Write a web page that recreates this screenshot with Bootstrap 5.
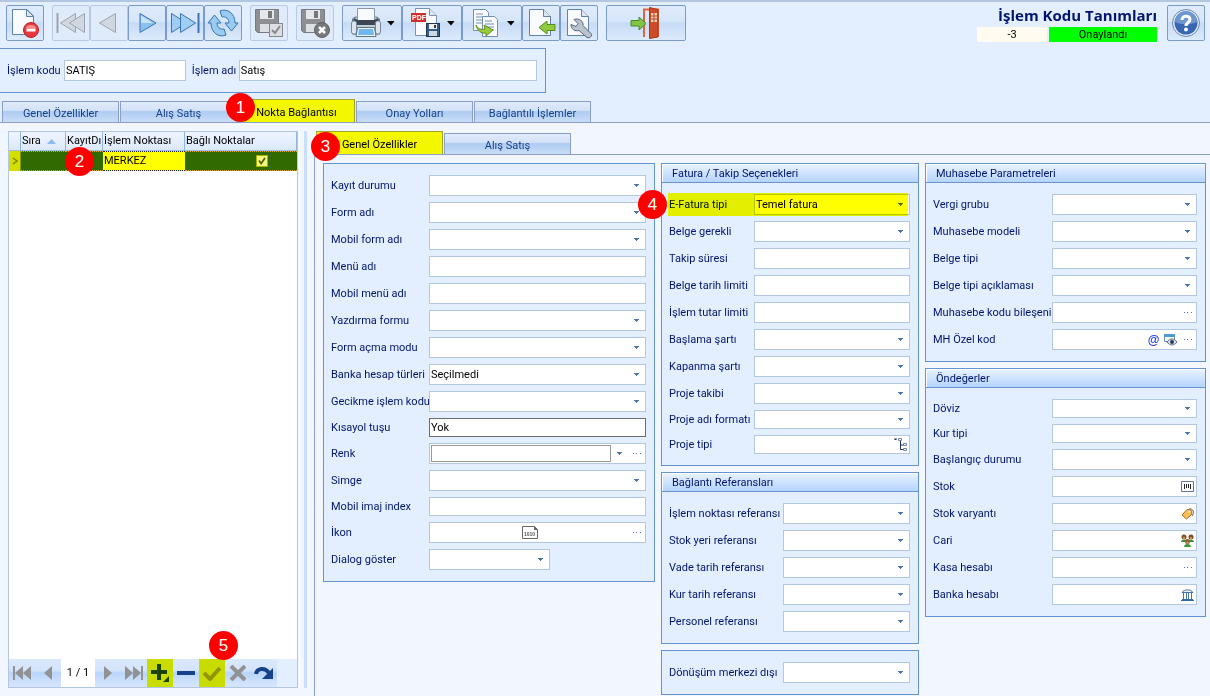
<!DOCTYPE html>
<html lang="tr">
<head>
<meta charset="utf-8">
<meta name="viewport" content="width=device-width, initial-scale=1">
<title>İşlem Kodu Tanımları</title>
<link href="https://cdn.jsdelivr.net/npm/bootstrap@5.3.0/dist/css/bootstrap.min.css" rel="stylesheet">
<style>
body{font-family:Roboto,"Noto Sans",sans-serif;font-size:11px;line-height:14px;color:#00156e;background:#e3efff}
button,input,select{font:inherit}
.toolbar{border-top:2px solid #b4c7e0;padding:3px 5px 0 6px;gap:8px}
.tb{height:36px;width:38px;padding:0;border:1px solid #7b9bcb;border-radius:2px;background:linear-gradient(#dfebfa,#d6e6fa 45%,#c6dbf5 50%,#dcebfd);display:flex;align-items:center;justify-content:center}
.tb:disabled{border-color:#b9cbe4;background:#dfeafa;opacity:1}
.tb-drop{width:60px;gap:5px}
.tb-exit{width:80px}
.tb svg{width:32px;height:32px;flex:none}
.tb .caret{width:8px;height:5px}
.formtitle{font:bold 15px/20px "Open Sans","Noto Sans",sans-serif;margin:0;text-align:right}
.pill{height:15px;line-height:15px;text-align:center;color:#000}
.idbox{background:#fffbf0;width:70px}
.okbox{background:#0f0;width:108px}
.keybox{border:1px solid #6595d1;border-left:0;max-width:546px;height:45px;margin-top:6px;padding:0 8px 0 7px}
.ctl{border:1px solid #b4c7e0;background:#fff;border-radius:0;height:21px;padding:0 1px;color:#000;min-width:0;display:block;flex:1 1 0}
.low{height:19px}
select.ctl{appearance:none;background:#fff url("data:image/svg+xml,%3Csvg xmlns='http://www.w3.org/2000/svg' width='5' height='3'%3E%3Cpath d='M0 0h5v1H4v1H3v1H2V2H1V1H0z' fill='%234a77b4'/%3E%3C/svg%3E") no-repeat right 6px center}
.combo{display:flex;align-items:center;padding-right:0}
.combo input{border:0;background:none;flex:1 1 0;min-width:0;padding:0;height:17px}
.combo button{border:0;background:none;padding:0;width:17px;height:17px;display:flex;align-items:center;justify-content:center}
.combo svg{display:block}
.tabs{border-bottom:1px solid #8ba0c8;align-items:flex-end}
.tabs button{width:117px;height:21px;margin-right:1px;border:1px solid #8ba0c8;border-bottom:0;border-radius:1px 1px 0 0;color:#15428b;padding:3px 0 0;background:linear-gradient(#e0ebfa,#d3e2f8 42%,#aecbf1 48%,#c9ddf8)}
.tabs button.active{height:23px;background:#f3f800;color:#000;border-color:#a0a32c}
.tabs .wide{width:127px}
.work{background:#f2f6ff}
.listpane{width:299px;padding:8px 1px 8px 8px}
.listbox{border:1px solid #b4c7e0;background:#fff}
.gridt{table-layout:fixed;width:100%;color:#000;border-collapse:separate;border-spacing:0}
.gridt th{height:19px;font-weight:normal;padding:0 1px;overflow:hidden;white-space:nowrap;color:#000;background:linear-gradient(#eef5ff,#dce9fb);border-right:1px solid #8fb3e3;border-bottom:1px solid #9ebbe5}
.gridt td{height:20px;padding:0 1px;background:#316a00;border:dotted #e0b000;border-width:1px 0}
.gridt td.ind{background:#d4df00;border:0;border-right:1px solid #8d9a00;text-align:center;padding:0}
.gridt td.hit{background:#ff0;border-color:#222}
.gridt input{appearance:none;display:block;width:12px;height:12px;margin:0 0 0 70px;border:1px solid #a8b000;background:#f4f780 url("data:image/svg+xml,%3Csvg xmlns='http://www.w3.org/2000/svg' width='10' height='10'%3E%3Cpath d='M2 4.500l2.200 3L8 2' fill='none' stroke='%23566500' stroke-width='1.800'/%3E%3C/svg%3E") center no-repeat}
.navi{height:28px;background:#e3efff}
.navi button{width:26px;height:28px;border:0;padding:0;background:linear-gradient(#dce9fc,#d3e4fc 40%,#b9d5fc 50%,#d3e4fc 90%);display:flex;align-items:center;justify-content:center}
.navi span.pos{width:34px;height:28px;line-height:28px;background:#fff;color:#000;text-align:center}
.navi button.hit{background:#c8dc00}
.split{width:8px;margin:8px 0;border-left:1px solid #fff}
.split i{display:block;width:3px;height:100%;margin-left:4px;background:#c9defa}
.detail{padding-top:8px;margin-left:7px;min-width:0}
.detail .tabs{padding-left:2px}
.sheet{border-left:1px solid #8ba0c8;padding:8px 4px 1px 8px;gap:6px}
.colA{flex:332 1 0;min-width:0}.colB{flex:258 1 0;min-width:0}.colC{flex:281 1 0;min-width:0}
.stack{display:flex;flex-direction:column;gap:6px}
.panelx{border:1px solid #6595d1;background:#e3efff;margin:0}
.panelx h2{font:inherit;margin:0;height:19px;line-height:19px;padding-left:10px;border-bottom:1px solid #6595d1;background:linear-gradient(#e9f3ff,#b5d4ff);box-shadow:inset 1px 1px #fff}
.rows{display:flex;flex-direction:column;gap:6px;padding:11px 8px 11px 7px}
.rows>div{display:flex;align-items:center;position:relative}
.rows label{width:98px;flex:none;white-space:nowrap}
.w85 label{width:85px}.w114 label{width:114px}.w119 label{width:119px}
.glow{position:absolute;inset:-1px 2px -1px -1px;background:#ff0;mix-blend-mode:multiply;pointer-events:none}
.step{position:absolute;width:29px;height:29px;border-radius:50%;background:#f00;color:#fff;font:17px/29px "Liberation Sans",Arial,sans-serif;text-align:center;z-index:5}
.s1{left:-13px;top:-7px}.s2{left:-1px;top:-5px}.s3{left:-6px;top:0}.s4{left:-31px;top:-4px}.s5{left:10px;top:-28px}
</style>
</head>
<body>
<div class="min-vh-100 d-flex flex-column">
<header class="toolbar d-flex align-items-start">
<button class="tb" aria-label="Sil"><svg viewBox="0 0 32 32"><path d="M3.500 2.500h14.500l6.500 6.500v18.500h-21z" fill="#f9fbfe" stroke="#5f84a8"/><path d="M17.500 2.500v7h7z" fill="#dce6f1" stroke="#5f84a8"/><circle cx="22" cy="23" r="7.500" fill="#e83a3e" stroke="#b92226"/><path d="M16.500 21a6 5 0 0 1 11 0z" fill="#f58e8e"/><rect x="17.500" y="21.500" width="9" height="3" fill="#fff"/></svg></button>
<div class="d-flex">
<button class="tb" disabled aria-label="İlk"><svg viewBox="0 0 32 32" fill="#d0d7e0" stroke="#9ba5b2"><path d="M2.500 6v20" stroke-width="2"/><path d="M20.500 6.500v19L5.500 16z"/><path d="M29.500 6.500v19L14.500 16z"/></svg></button>
<button class="tb" disabled aria-label="Önceki"><svg viewBox="0 0 32 32"><path d="M22.500 6.500v19L6.500 16z" fill="#d0d7e0" stroke="#9ba5b2"/></svg></button>
<button class="tb" aria-label="Sonraki"><svg viewBox="0 0 32 32"><path d="M9 6.500v19l16-9.500z" fill="#8cc0ee" stroke="#3c75b4"/><path d="M10 8.500V16h12z" fill="#c9e4fa"/></svg></button>
<button class="tb" aria-label="Son"><svg viewBox="0 0 32 32" fill="#9fcdf3" stroke="#3c75b4"><path d="M2.500 6.500v19l15-9.500z"/><path d="M11.500 6.500v19l15-9.500z"/><path d="M29.500 6v20" stroke-width="2"/></svg></button>
<button class="tb" aria-label="Yenile"><svg viewBox="0 0 32 32" fill="#9acbf0" stroke="#3873ae"><path d="M13 4C20 1 28 6 28 16h3l-6.500 8-6.500-8h4c0-4-3-7-7-6z"/><path d="M19 28C12 31 4 26 4 16H1l6.500-8L14 16h-4c0 4 3 7 7 6z"/></svg></button>
</div>
<button class="tb" disabled aria-label="Kaydet"><svg viewBox="0 0 32 32"><path d="M2.500 2.500h23v23h-21l-2-2z" fill="#8c8f94" stroke="#777a80"/><rect x="7" y="3" width="14" height="9" fill="#e5e7ea"/><rect x="15" y="4" width="4" height="7" fill="#777"/><rect x="7" y="17" width="15" height="8" fill="#dcdfe3"/><rect x="16.500" y="16.500" width="13" height="13" fill="#dcdee1" stroke="#85888c"/><path d="M19 23l3 3 5-7" fill="none" stroke="#858789" stroke-width="2"/></svg></button>
<button class="tb" disabled aria-label="İptal"><svg viewBox="0 0 32 32"><path d="M2.500 2.500h23v23h-21l-2-2z" fill="#8c8f94" stroke="#777a80"/><rect x="7" y="3" width="14" height="9" fill="#e5e7ea"/><rect x="15" y="4" width="4" height="7" fill="#777"/><rect x="7" y="17" width="15" height="8" fill="#dcdfe3"/><circle cx="23" cy="23" r="7.500" fill="#77797c" stroke="#5f6163"/><path d="M20 20l6 6m0-6l-6 6" stroke="#fff" stroke-width="2.500"/></svg></button>
<div class="d-flex">
<button class="tb tb-drop" aria-label="Yazdır"><svg viewBox="0 0 32 32"><path d="M2.500 13c0-2 2-3 4-3h19c2 0 4 1 4 3v14h-27z" fill="#c3cfdc" stroke="#63758a"/><path d="M7.500 1.500h17v12h-17z" fill="#f7faff" stroke="#8998ab"/><path d="M4 11l4 2h16l4-2c2 3 0 7-4 7H8c-4 0-6-4-4-7z" fill="#3c4654"/><rect x="1.500" y="14" width="5" height="13" rx="2" fill="#dde5ed" stroke="#74879c"/><rect x="25.500" y="14" width="5" height="13" rx="2" fill="#dde5ed" stroke="#74879c"/><path d="M7.500 20.500h17l1.500 9H6z" fill="#eff5fb" stroke="#5f7389"/><path d="M9 22h14l1 6H8z" fill="#6fb7ee"/></svg><svg class="caret" viewBox="0 0 8 5"><path d="M0 0h7.500L4 4.500z"/></svg></button>
<button class="tb tb-drop" aria-label="PDF kaydet"><svg viewBox="0 0 32 32"><path d="M5.500 1.500h14l7 7v20h-21z" fill="#f9fbfe" stroke="#7b94ad"/><path d="M19.500 1.500v7h7" fill="#dce6f1" stroke="#7b94ad"/><rect x="1" y="6" width="15" height="9" fill="#d02f2a"/><text x="2" y="13" font-family="Liberation Sans" font-size="7" font-weight="bold" fill="#fff">PDF</text><rect x="16.500" y="16.500" width="13" height="13" fill="#355c89" stroke="#21384f"/><rect x="19" y="17" width="8" height="5" fill="#edf1f5"/><rect x="19" y="24" width="8" height="5" fill="#cfd9e4"/><rect x="24" y="18" width="2" height="3" fill="#333"/></svg><svg class="caret" viewBox="0 0 8 5"><path d="M0 0h7.500L4 4.500z"/></svg></button>
<button class="tb tb-drop" aria-label="Kopyala"><svg viewBox="0 0 32 32"><path d="M3.500 2.500h12l3 3v18h-15z" fill="#fafcff" stroke="#718fb0"/><path d="M6 7h7M6 10h9M6 13h9M6 16h9" stroke="#6f90bd"/><path d="M12.500 9.500h12l3 3v17h-15z" fill="#fafcff" stroke="#718fb0"/><path d="M15 14h7M15 17h9M15 20h9M15 23h9" stroke="#6f90bd"/><path d="M6 18c2 4 5 5 9 4l-1-4 9 5-7 6v-3c-5 1-9-3-10-8z" fill="#9bcc38" stroke="#5d8d22"/></svg><svg class="caret" viewBox="0 0 8 5"><path d="M0 0h7.500L4 4.500z"/></svg></button>
<button class="tb" aria-label="İçe al"><svg viewBox="0 0 32 32"><path d="M4.500 2.500h14l7 7v19h-21z" fill="#f9fbfe" stroke="#5f84a8"/><path d="M18.500 2.500v7h7" fill="#dce6f1" stroke="#5f84a8"/><path d="M14 20.500l8-6.500v3.500h8v6h-8V27z" fill="#91ca3e" stroke="#558c20"/></svg></button>
<button class="tb" aria-label="Ayarlar"><svg viewBox="0 0 32 32"><path d="M4.500 2.500h14l7 7v19h-21z" fill="#f9fbfe" stroke="#5f84a8"/><path d="M18.500 2.500v7h7" fill="#dce6f1" stroke="#5f84a8"/><path d="M11 12.500l4 4-2 3-5-2c0 5 4 7 8 6l8 7c3 1 6-2 4-4l-8-8c1-4-4-8-9-6z" fill="#b9c3d0" stroke="#56677c"/></svg></button>
</div>
<button class="tb tb-exit" aria-label="Çıkış"><svg viewBox="0 0 32 32"><path d="M14 30V2.500h14V30" fill="none" stroke="#dd6544" stroke-width="2"/><path d="M19.500.500l8.500 2V30l-8.500 1.500z" fill="#cf4a26" stroke="#ad3719"/><path d="M21 6h6v9h-6z" fill="#f3d4b6"/><path d="M24 6v9M21 9h6M21 12h6" stroke="#ba4525"/><path d="M1 13.500h8V10l7 6.500L9 23v-4H1z" fill="#82c544" stroke="#458b28"/></svg></button>
<div class="ms-auto d-flex align-items-start" style="gap:10px">
<div>
<h1 class="formtitle">İşlem Kodu Tanımları</h1>
<div class="d-flex" style="gap:2px;margin-top:2px"><div class="pill idbox">-3</div><div class="pill okbox">Onaylandı</div></div>
</div>
<button class="tb" aria-label="Yardım"><svg viewBox="0 0 32 32"><circle cx="16" cy="16" r="13.500" fill="#e6edf8" stroke="#6b87b5"/><circle cx="16" cy="16" r="11.500" fill="#3866b2"/><path d="M5 15a11 11 0 0 1 22 0c-6 3-16 3-22 0z" fill="#6e97d2"/><path d="M12 13c0-5 8-5 8-.5 0 3-4 3-4 6.500" fill="none" stroke="#fff" stroke-width="3"/><circle cx="16" cy="22.500" r="2" fill="#fff"/></svg></button>
</div>
</header>

<section class="keybox d-flex align-items-center">
<label for="kod" style="width:57px">İşlem kodu</label><input id="kod" class="ctl" style="flex:120 1 0" value="SATIŞ">
<label for="adi" style="width:47px;margin-left:6px">İşlem adı</label><input id="adi" class="ctl" style="flex:300 1 0" value="Satış">
</section>

<nav class="tabs d-flex" style="padding:6px 0 0 2px" aria-label="Ana sekmeler">
<button>Genel Özellikler</button><button>Alış Satış</button><button class="active position-relative">Nokta Bağlantısı<span class="step s1">1</span></button><button>Onay Yolları</button><button>Bağlantılı İşlemler</button>
</nav>

<main class="work d-flex flex-grow-1">
<aside class="listpane d-flex flex-shrink-0">
<div class="listbox d-flex flex-column flex-grow-1">
<table class="gridt">
<colgroup><col style="width:12px"><col style="width:45px"><col style="width:37px"><col style="width:82px"><col></colgroup>
<thead><tr><th></th><th>Sıra <svg class="ms-1" width="9" height="5" viewBox="0 0 9 5"><path d="M0 5l4.500-5L9 5z" fill="#8db8ee"/></svg></th><th>KayıtDı</th><th>İşlem Noktası</th><th>Bağlı Noktalar</th></tr></thead>
<tbody><tr><td class="ind"><svg width="6" height="8" viewBox="0 0 6 8"><path d="M1 1l4 3-4 3" fill="none" stroke="#7c8a00" stroke-width="1.500"/></svg></td><td></td><td class="position-relative"><span class="step s2">2</span></td><td class="hit">MERKEZ</td><td><input type="checkbox" checked aria-label="Bağlı noktalar"></td></tr></tbody>
</table>
<div class="navi d-flex mt-auto">
<button aria-label="İlk kayıt"><svg width="20" height="16" fill="#929292"><path d="M1 1h2v14H1zM11 1v14L3 8zM19 1v14l-8-7z"/></svg></button>
<button aria-label="Önceki kayıt"><svg width="10" height="16" fill="#929292"><path d="M9 1v14L1 8z"/></svg></button>
<span class="pos">1 / 1</span>
<button aria-label="Sonraki kayıt"><svg width="10" height="16" fill="#929292"><path d="M1 1v14l8-7z"/></svg></button>
<button aria-label="Son kayıt"><svg width="20" height="16" fill="#929292"><path d="M17 1h2v14h-2zM9 1v14l8-7zM1 1v14l8-7z"/></svg></button>
<button class="hit" aria-label="Ekle"><svg width="20" height="20" fill="#1b4300"><path d="M7 1h4v6h6v4h-6v6H7v-6H1V7h6zM19 13v6h-6z"/></svg></button>
<button aria-label="Çıkar"><svg width="18" height="4"><path d="M0 0h18v4H0z" fill="#15428b"/></svg></button>
<button class="hit position-relative" aria-label="Onayla"><svg width="18" height="16"><path d="M1 8l6 6L17 3" fill="none" stroke="#919500" stroke-width="4"/></svg><span class="step s5">5</span></button>
<button aria-label="Vazgeç"><svg width="18" height="16"><path d="M2 1l14 14M16 1L2 15" stroke="#929292" stroke-width="4"/></svg></button>
<button aria-label="Yenile"><svg width="20" height="16"><path d="M2 9c1-6 9-7 13-1" fill="none" stroke="#15428b" stroke-width="4"/><path d="M19 3v11H8z" fill="#15428b"/></svg></button>
</div>
</div>
</aside>
<div class="split flex-shrink-0"><i></i></div>

<section class="detail flex-grow-1 d-flex flex-column">
<nav class="tabs d-flex" aria-label="Ayrıntı sekmeleri"><button class="active wide position-relative">Genel Özellikler<span class="step s3">3</span></button><button class="wide">Alış Satış</button></nav>
<div class="sheet d-flex align-items-start flex-grow-1">
<div class="colA"><form class="panelx"><div class="rows">
<div><label for="a1">Kayıt durumu</label><select id="a1" class="ctl"></select></div>
<div><label for="a2">Form adı</label><select id="a2" class="ctl"></select></div>
<div><label for="a3">Mobil form adı</label><select id="a3" class="ctl"></select></div>
<div><label for="a4">Menü adı</label><input id="a4" class="ctl"></div>
<div><label for="a5">Mobil menü adı</label><input id="a5" class="ctl"></div>
<div><label for="a6">Yazdırma formu</label><select id="a6" class="ctl"></select></div>
<div><label for="a7">Form açma modu</label><select id="a7" class="ctl"></select></div>
<div><label for="a8">Banka hesap türleri</label><select id="a8" class="ctl"><option>Seçilmedi</option></select></div>
<div><label for="a9">Gecikme işlem kodu</label><select id="a9" class="ctl"></select></div>
<div><label for="a10">Kısayol tuşu</label><input id="a10" class="ctl low" style="border-color:#6d6d6d" value="Yok"></div>
<div><label for="a11">Renk</label><div class="ctl combo"><input id="a11" style="border:1px solid #999"><button type="button" aria-label="Renk listesi"><svg width="5" height="3"><path d="M0 0h5v1H4v1H3v1H2V2H1V1H0z" fill="#4a77b4"/></svg></button><button type="button" aria-label="Renk seç"><svg width="8" height="1"><path d="M0 0h1v1H0zM3 0h1v1H3zM7 0h1v1H7z" fill="#4a77b4"/></svg></button></div></div>
<div><label for="a12">Simge</label><select id="a12" class="ctl"></select></div>
<div><label for="a13">Mobil imaj index</label><input id="a13" class="ctl low"></div>
<div><label for="a14">İkon</label><div class="ctl combo"><span class="flex-grow-1 d-flex justify-content-center"><svg width="16" height="13" viewBox="0 0 16 13"><path d="M.5.5h12l3 3v9H.5z" fill="#fff" stroke="#666"/><path d="M12 0v4h4z" fill="#666"/><text x="2" y="10" font-family="Liberation Sans" font-size="5" font-weight="bold" fill="#555">1010</text></svg></span><button id="a14" type="button" aria-label="İkon seç"><svg width="8" height="1"><path d="M0 0h1v1H0zM3 0h1v1H3zM7 0h1v1H7z" fill="#4a77b4"/></svg></button></div></div>
<div><label for="a15">Dialog göster</label><select id="a15" class="ctl" style="max-width:121px"></select></div>
</div></form></div>

<div class="colB stack">
<form class="panelx"><h2>Fatura / Takip Seçenekleri</h2><div class="rows w85">
<div><label for="b1">E-Fatura tipi</label><select id="b1" class="ctl"><option>Temel fatura</option></select><span class="glow"></span><span class="step s4">4</span></div>
<div><label for="b2">Belge gerekli</label><select id="b2" class="ctl"></select></div>
<div><label for="b3">Takip süresi</label><input id="b3" class="ctl"></div>
<div><label for="b4">Belge tarih limiti</label><input id="b4" class="ctl"></div>
<div><label for="b5">İşlem tutar limiti</label><input id="b5" class="ctl"></div>
<div><label for="b6">Başlama şartı</label><select id="b6" class="ctl"></select></div>
<div><label for="b7">Kapanma şartı</label><select id="b7" class="ctl"></select></div>
<div><label for="b8">Proje takibi</label><select id="b8" class="ctl"></select></div>
<div><label for="b9">Proje adı formatı</label><select id="b9" class="ctl low"></select></div>
<div><label for="b10">Proje tipi</label><div class="ctl combo low"><input id="b10"><button type="button" aria-label="Proje tipi seç"><svg width="14" height="13"><path d="M0 1h3M1.500 1v1M6.500 3v8.500H10M6.500 7H10" fill="none" stroke="#222f55"/><path d="M4.500.5h3v2h-3zM9.500 5.500h3v2h-3zM9.500 10.500h3v2h-3z" fill="#fff" stroke="#6d83ad"/></svg></button></div></div>
</div></form>
<form class="panelx"><h2>Bağlantı Referansları</h2><div class="rows w114">
<div><label for="c1">İşlem noktası referansı</label><select id="c1" class="ctl"></select></div>
<div><label for="c2">Stok yeri referansı</label><select id="c2" class="ctl"></select></div>
<div><label for="c3">Vade tarih referansı</label><select id="c3" class="ctl"></select></div>
<div><label for="c4">Kur tarih referansı</label><select id="c4" class="ctl"></select></div>
<div><label for="c5">Personel referansı</label><select id="c5" class="ctl"></select></div>
</div></form>
<form class="panelx"><div class="rows w114">
<div><label for="d1">Dönüşüm merkezi dışı</label><select id="d1" class="ctl"></select></div>
</div></form>
</div>

<div class="colC stack">
<form class="panelx"><h2>Muhasebe Parametreleri</h2><div class="rows w119">
<div><label for="e1">Vergi grubu</label><select id="e1" class="ctl"></select></div>
<div><label for="e2">Muhasebe modeli</label><select id="e2" class="ctl"></select></div>
<div><label for="e3">Belge tipi</label><select id="e3" class="ctl"></select></div>
<div><label for="e4">Belge tipi açıklaması</label><select id="e4" class="ctl"></select></div>
<div><label for="e5">Muhasebe kodu bileşeni</label><div class="ctl combo"><input id="e5"><button type="button" aria-label="Seç"><svg width="8" height="1"><path d="M0 0h1v1H0zM3 0h1v1H3zM7 0h1v1H7z" fill="#4a77b4"/></svg></button></div></div>
<div><label for="e6">MH Özel kod</label><div class="ctl combo"><input id="e6"><button type="button" aria-label="Adres" style="font:bold 12px/12px 'Liberation Sans',sans-serif;color:#2440dd">@</button><button type="button" aria-label="Önizle"><svg width="13" height="12"><path d="M.5.5h10v7H.5z" fill="#f5faff" stroke="#6f8bad"/><path d="M0 0h11v3H0z" fill="#4f9bd0"/><path d="M3 8c3-4 7-4 10 0-3 4-7 4-10 0z" fill="#dfe5ed" stroke="#596a82"/><circle cx="8" cy="8" r="2" fill="#303c55"/></svg></button><button type="button" aria-label="Seç"><svg width="8" height="1"><path d="M0 0h1v1H0zM3 0h1v1H3zM7 0h1v1H7z" fill="#4a77b4"/></svg></button></div></div>
</div></form>
<form class="panelx"><h2>Öndeğerler</h2><div class="rows w119">
<div><label for="f1">Döviz</label><select id="f1" class="ctl low"></select></div>
<div><label for="f2">Kur tipi</label><select id="f2" class="ctl low"></select></div>
<div><label for="f3">Başlangıç durumu</label><select id="f3" class="ctl"></select></div>
<div><label for="f4">Stok</label><div class="ctl combo"><input id="f4"><button type="button" aria-label="Stok seç"><svg width="13" height="11"><path d="M.5.5h12v10H.5z" fill="#fff" stroke="#6575a8"/><path d="M3.500 3v5M5.500 3v4M7.500 3v4M9.500 3v5" stroke="#222"/></svg></button></div></div>
<div><label for="f5">Stok varyantı</label><div class="ctl combo"><input id="f5"><button type="button" aria-label="Varyant seç"><svg width="13" height="12"><path d="M1 7l5-5.500 4 .5 1 4-5.500 5z" fill="#f8bf58" stroke="#a96a22"/><circle cx="8.500" cy="3.500" r="1" fill="#fff"/><path d="M8 1c4-1 6 4 3 7" fill="none" stroke="#6d5a4b"/></svg></button></div></div>
<div><label for="f6">Cari</label><div class="ctl combo"><input id="f6"><button type="button" aria-label="Cari seç"><svg width="13" height="13"><path d="M0 8c0-3 6-3 6 0zM7 8c0-3 6-3 6 0z" fill="#3f8f35"/><circle cx="3" cy="3" r="2.500" fill="#7b4d22"/><circle cx="10" cy="3" r="2.500" fill="#7b4d22"/><path d="M3 13c0-4 7-4 7 0z" fill="#369a2f"/><circle cx="6.500" cy="7.500" r="2.500" fill="#8f5a28"/><circle cx="3" cy="4" r="1.200" fill="#c98f55"/><circle cx="10" cy="4" r="1.200" fill="#c98f55"/><circle cx="6.500" cy="8.500" r="1.200" fill="#c98f55"/></svg></button></div></div>
<div><label for="f7">Kasa hesabı</label><div class="ctl combo"><input id="f7"><button type="button" aria-label="Kasa seç"><svg width="8" height="1"><path d="M0 0h1v1H0zM3 0h1v1H3zM7 0h1v1H7z" fill="#4a77b4"/></svg></button></div></div>
<div><label for="f8">Banka hesabı</label><div class="ctl combo"><input id="f8"><button type="button" aria-label="Banka seç"><svg width="13" height="13"><path d="M1 4.500C3 1 10 1 12 4.500z" fill="#e8f1fa" stroke="#4c759c"/><path d="M2.500 5v6M5.500 5v6M7.500 5v6M10.500 5v6" stroke="#4c759c"/><path d="M1 11.500h11M0 12.500h13" stroke="#2f6aa8"/></svg></button></div></div>
</div></form>
</div>
</div>
</section>
</main>
</div>
<script src="https://cdn.jsdelivr.net/npm/bootstrap@5.3.0/dist/js/bootstrap.bundle.min.js"></script>
</body>
</html>
